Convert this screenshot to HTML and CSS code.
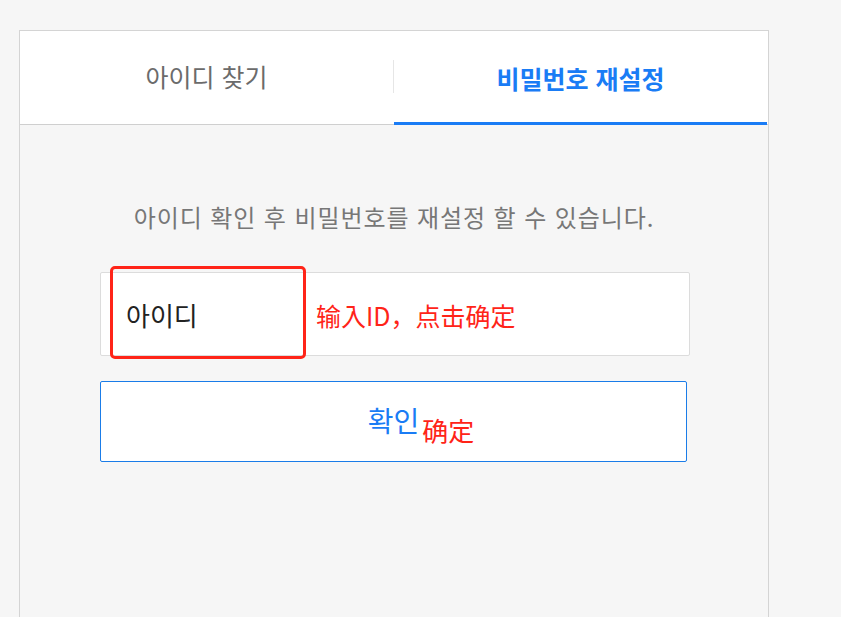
FILE: index.html
```html
<!DOCTYPE html>
<html lang="ko">
<head>
<meta charset="utf-8">
<link rel="stylesheet" href="styles.css">
</head>
<body>
<div class="card">
  <div class="tabs">
    <div class="tab">아이디 찾기</div>
    <div class="sep"></div>
    <div class="tab active">비밀번호 재설정</div>
  </div>
  <div class="body">
    <p class="desc">아이디 확인 후 비밀번호를 재설정 할 수 있습니다.</p>
    <div class="field">
      <span class="value">아이디</span>
      <div class="mark"></div>
      <span class="note note-input">输入ID，点击确定</span>
    </div>
    <button class="btn"><span class="btn-label">확인<span class="note note-btn">确定</span></span></button>
  </div>
</div>
</body>
</html>
```
FILE: styles.css
```css
html, body {
  margin: 0;
  padding: 0;
}
body {
  background: #f6f6f6;
  font-family: "Noto Sans CJK KR", "Noto Sans", sans-serif;
  padding: 30px 0 0 19px;
  height: 617px;
  box-sizing: border-box;
  overflow: hidden;
}
.card {
  width: 750px;
  height: 600px;
  box-sizing: border-box;
  border: 1px solid #d4d4d4;
  border-bottom: none;
  background: #f6f6f6;
}
.tabs {
  display: flex;
  align-items: center;
  height: 94px;
  box-sizing: border-box;
  background: #fff;
  border-bottom: 1px solid #cfcfcf;
}
.tab {
  flex: 1;
  height: 94px;
  box-sizing: border-box;
  display: flex;
  align-items: center;
  justify-content: center;
  font-size: 25px;
  color: #6b6b6b;
  padding-bottom: 4px;
}
.tab.active {
  color: #1a7cf5;
  font-weight: 700;
  border-bottom: 3px solid #1a7cf5;
  margin-bottom: -1px;
  padding-bottom: 0;
  padding-top: 2px;
  margin-right: 1px;
}
.sep {
  width: 1px;
  height: 33px;
  background: #e6e6e6;
  margin-top: -3px;
}
.body {
  padding: 0 0 0 80px;
}
.desc {
  margin: 72px 0 0 -80px;
  text-align: center;
  font-size: 24px;
  letter-spacing: 0.9px;
  color: #777;
  line-height: 40px;
}
.field {
  position: relative;
  margin-top: 35px;
  width: 590px;
  height: 84px;
  box-sizing: border-box;
  background: #fff;
  border: 1px solid #dcdcdc;
  border-radius: 2px;
  display: flex;
  align-items: center;
  padding-left: 25px;
}
.value {
  font-size: 26px;
  color: #222;
}
.mark {
  position: absolute;
  left: 9px;
  top: -7px;
  width: 196px;
  height: 93px;
  box-sizing: border-box;
  border: 3px solid #ff2418;
  border-radius: 5px;
}
.note {
  color: #ff2418;
  font-family: "Noto Sans CJK SC", sans-serif;
  font-size: 25px;
  white-space: nowrap;
}
.note-input {
  position: absolute;
  left: 215px;
  top: 24px;
  line-height: 36px;
}
.btn {
  display: flex;
  align-items: center;
  justify-content: center;
  margin-top: 25px;
  width: 587px;
  height: 81px;
  box-sizing: border-box;
  background: #fff;
  border: 1px solid #1a7ce8;
  border-radius: 2px;
  padding: 0;
  font-family: "Noto Sans CJK KR", sans-serif;
  font-size: 28px;
  color: #1a7cf5;
}
.btn-label {
  position: relative;
  line-height: 36px;
  padding-bottom: 4px;
}
.note-btn {
  position: absolute;
  left: 100%;
  top: 10px;
  margin-left: 3px;
  font-size: 26px;
  line-height: 36px;
}
```
